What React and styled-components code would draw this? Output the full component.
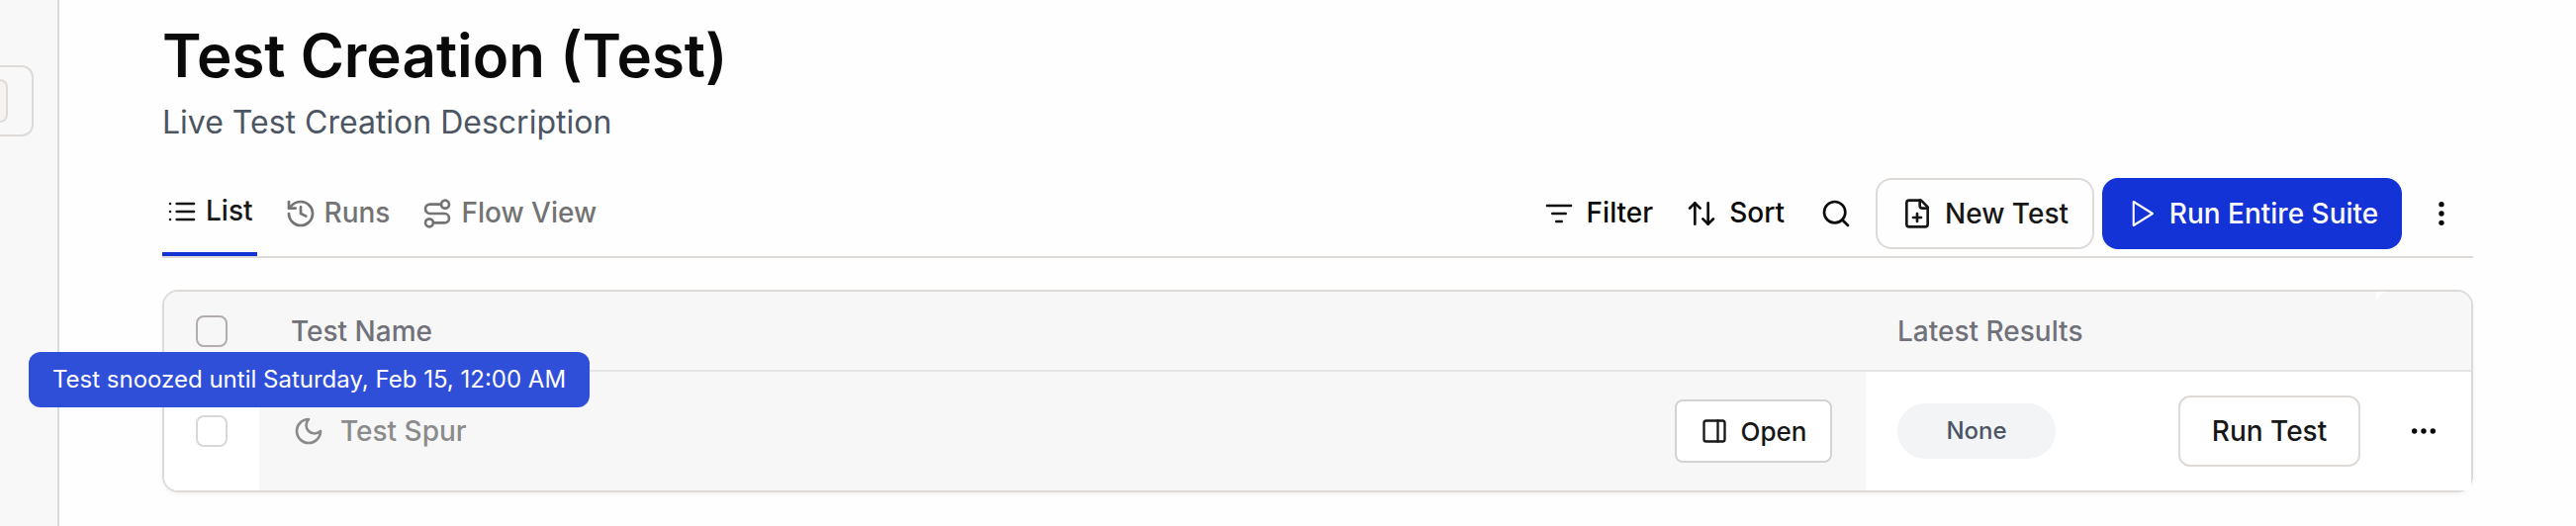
import React from 'react'
import styled, { createGlobalStyle } from 'styled-components'
import { History, ArrowUpDown, Search, PanelRight } from 'lucide-react'

function Icon({ children, ...rest }) {
  return (
    <svg
      width="32"
      height="32"
      viewBox="0 0 24 24"
      fill="none"
      stroke="currentColor"
      strokeWidth="2"
      strokeLinecap="round"
      strokeLinejoin="round"
      {...rest}
    >
      {children}
    </svg>
  )
}

function ListIcon() {
  return (
    <Icon>
      <path d="M8 6h13M8 12h13M8 18h13M3 6h.01M3 12h.01M3 18h.01" />
    </Icon>
  )
}

function FilterIcon() {
  return (
    <Icon>
      <path d="M3 6h18M7 12h10M10 18h4" />
    </Icon>
  )
}

function FlowIcon() {
  return (
    <Icon>
      <circle cx="6" cy="19" r="3" />
      <path d="M9 19h8.5a3.5 3.5 0 0 0 0-7h-11a3.5 3.5 0 0 1 0-7H15" />
      <circle cx="18" cy="5" r="3" />
    </Icon>
  )
}

function FilePlusIcon() {
  return (
    <Icon>
      <path d="M15 2H6a2 2 0 0 0-2 2v16a2 2 0 0 0 2 2h12a2 2 0 0 0 2-2V7Z" />
      <path d="M14 2v4a2 2 0 0 0 2 2h4" />
      <path d="M9 15h6" />
      <path d="M12 18v-6" />
    </Icon>
  )
}

function PlayIcon() {
  return (
    <Icon strokeWidth="1.6">
      <path d="M5.8 3L20.200 12 5.800 21Z" />
    </Icon>
  )
}

function MoonIcon() {
  return (
    <Icon>
      <path d="M12 3a6 6 0 0 0 9 9 9 9 0 1 1-9-9Z" />
    </Icon>
  )
}

function Dots({ vertical }) {
  return (
    <svg width="32" height="32" viewBox="0 0 32 32" fill="currentColor">
      {[6.67, 16, 25.33].map((n) => (
        <circle key={n} cx={vertical ? 16 : n} cy={vertical ? n : 16} r="2.7" />
      ))}
    </svg>
  )
}

function App() {
  return (
    <Page>
      <GlobalStyle />
      <Sidebar>
        <SidebarBox>
          <SidebarKey />
        </SidebarBox>
      </Sidebar>
      <Main>
        <Title>Test Creation (Test)</Title>
        <Description>Live Test Creation Description</Description>
        <Toolbar>
          <Tabs>
            <Tab $active>
              <ListIcon />
              <Label>List</Label>
            </Tab>
            <Tab>
              <History size={32} />
              <Label>Runs</Label>
            </Tab>
            <Tab>
              <FlowIcon />
              <Label>Flow View</Label>
            </Tab>
          </Tabs>
          <Actions>
            <FilterButton>
              <FilterIcon />
              <Label>Filter</Label>
            </FilterButton>
            <SortButton>
              <ArrowUpDown size={32} />
              <Label>Sort</Label>
            </SortButton>
            <IconButton>
              <Search size={32} />
            </IconButton>
            <NewButton>
              <FilePlusIcon />
              New Test
            </NewButton>
            <SuiteButton>
              <PlayIcon />
              Run Entire Suite
            </SuiteButton>
            <MoreButton>
              <Dots vertical />
            </MoreButton>
          </Actions>
        </Toolbar>
        <Table>
          <HeaderRow>
            <CheckCell>
              <Checkbox />
            </CheckCell>
            <NameCell>Test Name</NameCell>
            <HeaderResultCell>Latest Results</HeaderResultCell>
            <HeaderEndCell />
          </HeaderRow>
          <Row>
            <CheckCell>
              <Checkbox $faded />
            </CheckCell>
            <SnoozedCell>
              <SnoozedName>
                <MoonIcon />
                Test Spur
              </SnoozedName>
              <OpenButton>
                <PanelRight size={28} />
                Open
              </OpenButton>
            </SnoozedCell>
            <ResultCell>
              <Badge>None</Badge>
              <RunButton>Run Test</RunButton>
              <Dots />
            </ResultCell>
          </Row>
        </Table>
      </Main>
      <Tooltip>Test snoozed until Saturday, Feb 15, 12:00 AM</Tooltip>
    </Page>
  )
}

export default App

const GlobalStyle = createGlobalStyle`
  * {
    box-sizing: border-box;
  }
  body {
    margin: 0;
    background: #fefefe;
    font-family: Inter, 'Liberation Sans', sans-serif;
    color: #0a0a0a;
  }
  svg {
    flex-shrink: 0;
  }
`
const Page = styled.div`
  position: relative;
  display: flex;
  width: 2604px;
  height: 532px;
  overflow: hidden;
`
const Sidebar = styled.div`
  width: 60px;
  padding-top: 66px;
  background: #f8f8f8;
  border-right: 2px solid #dadada;
`
const SidebarBox = styled.div`
  display: flex;
  align-items: center;
  width: 34px;
  height: 72px;
  border: 2px solid #dedad7;
  border-left: none;
  border-radius: 0 12px 12px 0;
`
const SidebarKey = styled.div`
  width: 8px;
  height: 44px;
  background: #f4f3f2;
  border: 2px solid #dedad7;
  border-left: none;
  border-radius: 0 8px 8px 0;
`
const Main = styled.div`
  width: 2440px;
  padding: 20px 0 0 104px;
`
const Title = styled.h1`
  margin: 0;
  font-size: 60px;
  line-height: 72px;
  font-weight: 600;
`
const Description = styled.p`
  margin: 8px 0 0;
  font-size: 32px;
  line-height: 48px;
  color: #4b5563;
`
const Toolbar = styled.div`
  display: flex;
  justify-content: space-between;
  height: 85px;
  margin-top: 28px;
  border-bottom: 2px solid #dedad7;
`
const Tabs = styled.div`
  display: flex;
  gap: 24px;
`
const Tab = styled.div`
  display: flex;
  align-items: center;
  gap: 8px;
  height: 83px;
  padding: 0 4px 3px;
  font-size: 28px;
  font-weight: 500;
  color: ${(props) => (props.$active ? '#171717' : '#737373')};
  border-bottom: ${(props) => (props.$active ? '4px solid #1433d6' : 'none')};
`
const Label = styled.span`
  padding-bottom: 2px;
`
const Actions = styled.div`
  display: flex;
  align-items: center;
  height: 72px;
  margin-top: 4px;
`
const BaseButton = styled.div`
  display: flex;
  align-items: center;
  justify-content: center;
  height: 72px;
  font-size: 28px;
  font-weight: 500;
  border-radius: 16px;
`
const FilterButton = styled(BaseButton)`
  gap: 12px;
  margin-right: 33px;
`
const SortButton = styled(FilterButton)`
  margin-right: 36px;
`
const IconButton = styled(BaseButton)`
  margin-right: 24px;
`
const NewButton = styled(BaseButton)`
  width: 221px;
  gap: 12px;
  color: #171717;
  border: 2px solid #dedad7;
`
const SuiteButton = styled(BaseButton)`
  width: 303px;
  gap: 12px;
  margin-left: 8px;
  color: #fafafa;
  background: #1433d6;
`
const MoreButton = styled(BaseButton)`
  width: 72px;
  padding-left: 8px;
`
const Table = styled.div`
  margin-top: 32px;
  border: 2px solid #dedad7;
  border-radius: 16px;
  box-shadow: 0 2px 4px rgba(0, 0, 0, 0.05);
`
const HeaderRow = styled.div`
  display: flex;
  height: 81px;
  font-size: 28px;
  font-weight: 500;
  color: #71717a;
  border-bottom: 2px solid #e4e4e4;
  border-radius: 14px 14px 0 0;
  overflow: hidden;
`
// last cell stays square so it runs into the table's corner
const Row = styled.div`
  display: flex;
  height: 120px;
  background: white;
  border-radius: 0 0 0 14px;
`
const CheckCell = styled.div`
  display: flex;
  align-items: center;
  width: 96px;
  padding-left: 32px;

  ${HeaderRow} & {
    background: #f7f7f7;
  }
`
const Checkbox = styled.div`
  width: 32px;
  height: 32px;
  border: 2px solid ${(props) => (props.$faded ? '#d8d8d8' : '#b3adad')};
  border-radius: 8px;
`
const NameCell = styled.div`
  display: flex;
  align-items: center;
  flex: 1;
  padding: 0 34px 0 32px;
  background: #f7f7f7;
`
const SnoozedCell = styled(NameCell)`
  justify-content: space-between;
  padding-left: 34px;
`
const SnoozedName = styled.div`
  display: flex;
  align-items: center;
  gap: 16px;
  font-size: 28px;
  font-weight: 500;
  color: #8b8b8b;
`
const OpenButton = styled(BaseButton)`
  width: 159px;
  height: 64px;
  gap: 13px;
  font-size: 26px;
  color: #171717;
  background: white;
  border: 2px solid #d3d3d3;
  border-radius: 8px;
`
const ResultCell = styled.div`
  display: flex;
  align-items: center;
  width: 612px;
  padding-left: 32px;
`
const HeaderResultCell = styled(ResultCell)`
  width: 516px;
  background: #f7f7f7;
`
const HeaderEndCell = styled.div`
  width: 96px;
  background: #f7f7f7;
  border-radius: 14px 0 0 0;
`
const Badge = styled.div`
  width: 160px;
  height: 56px;
  font-size: 24px;
  line-height: 56px;
  font-weight: 500;
  text-align: center;
  color: #4b5563;
  background: #f3f4f6;
  border-radius: 28px;
`
const RunButton = styled(BaseButton)`
  width: 184px;
  margin: 0 48px 0 124px;
  color: #171717;
  border: 2px solid #dedad7;
  border-radius: 12px;
`
// sits over the header and the first row
const Tooltip = styled.div`
  position: absolute;
  top: 356px;
  left: 29px;
  width: 567px;
  height: 56px;
  font-size: 24px;
  line-height: 56px;
  text-align: center;
  color: white;
  background: #304fd9;
  border-radius: 12px;
`
